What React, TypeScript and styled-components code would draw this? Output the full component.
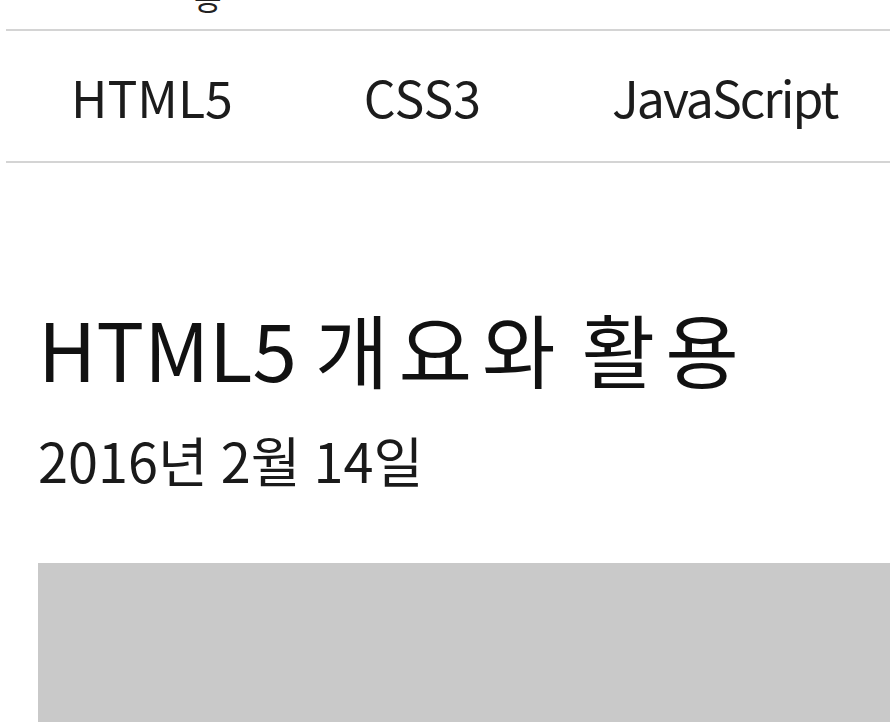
import React from "react";
import styled, { createGlobalStyle } from "styled-components";

const Global = createGlobalStyle`
  html, body { margin: 0; padding: 0; background: #ffffff; }
  body {
    font-family: "Noto Sans CJK KR", "Noto Sans", sans-serif;
    color: #111111;
    overflow: hidden;
  }
  ul { margin: 0; padding: 0; list-style: none; }
`;

const Page = styled.div`
  width: 890px;
  height: 722px;
  overflow: hidden;
`;

const Masthead = styled.header`
  height: 29px;
  overflow: hidden;
  padding-left: 194px;
`;

const SiteTitle = styled.h1`
  margin: -19px 0 0 0;
  font-size: 30px;
  font-weight: 400;
  line-height: 32px;
  color: #222;
  white-space: nowrap;
`;

const Nav = styled.nav`
  margin-left: 6px;
  border-top: 2px solid #d4d4d4;
  border-bottom: 2px solid #d4d4d4;
  height: 130px;
  display: flex;
  align-items: center;
`;

const NavList = styled.ul`
  display: flex;
`;

const NavItem = styled.li<{ $tracking?: number }>`
  padding: 0 66px 0 65px;
  font-size: 50px;
  line-height: 1;
  color: #1c1c1c;
  letter-spacing: ${(p) => p.$tracking ?? 0}px;
`;

const Main = styled.main`
  padding: 0 0 0 38px;
`;

const Title = styled.h2`
  margin: 144px 0 0 0;
  font-size: 80px;
  font-weight: 400;
  line-height: 1;
  color: #111;
`;

const Hangul = styled.span<{ $tracking: number; $wordGap?: number }>`
  letter-spacing: ${(p) => p.$tracking}px;
  word-spacing: ${(p) => p.$wordGap ?? 0}px;
`;

const DateLine = styled.p`
  margin: 46px 0 0 0;
  font-size: 54px;
  line-height: 1;
  color: #1a1a1a;
`;

const Figure = styled.div`
  margin-top: 76px;
  height: 200px;
  background: #c9c9c9;
`;

export default function App() {
  return (
    <Page>
      <Global />
      <Masthead>
        <SiteTitle>용</SiteTitle>
      </Masthead>
      <Nav>
        <NavList>
          <NavItem>HTML5</NavItem>
          <NavItem>CSS3</NavItem>
          <NavItem $tracking={-2}>JavaScript</NavItem>
        </NavList>
      </Nav>
      <Main>
        <Title>
          HTML5 <Hangul $tracking={10} $wordGap={-12}>개요와 활용</Hangul>
        </Title>
        <DateLine>
          2016<Hangul $tracking={1}>년</Hangul> 2<Hangul $tracking={1}>월</Hangul> 14
          <Hangul $tracking={1}>일</Hangul>
        </DateLine>
        <Figure />
      </Main>
    </Page>
  );
}
